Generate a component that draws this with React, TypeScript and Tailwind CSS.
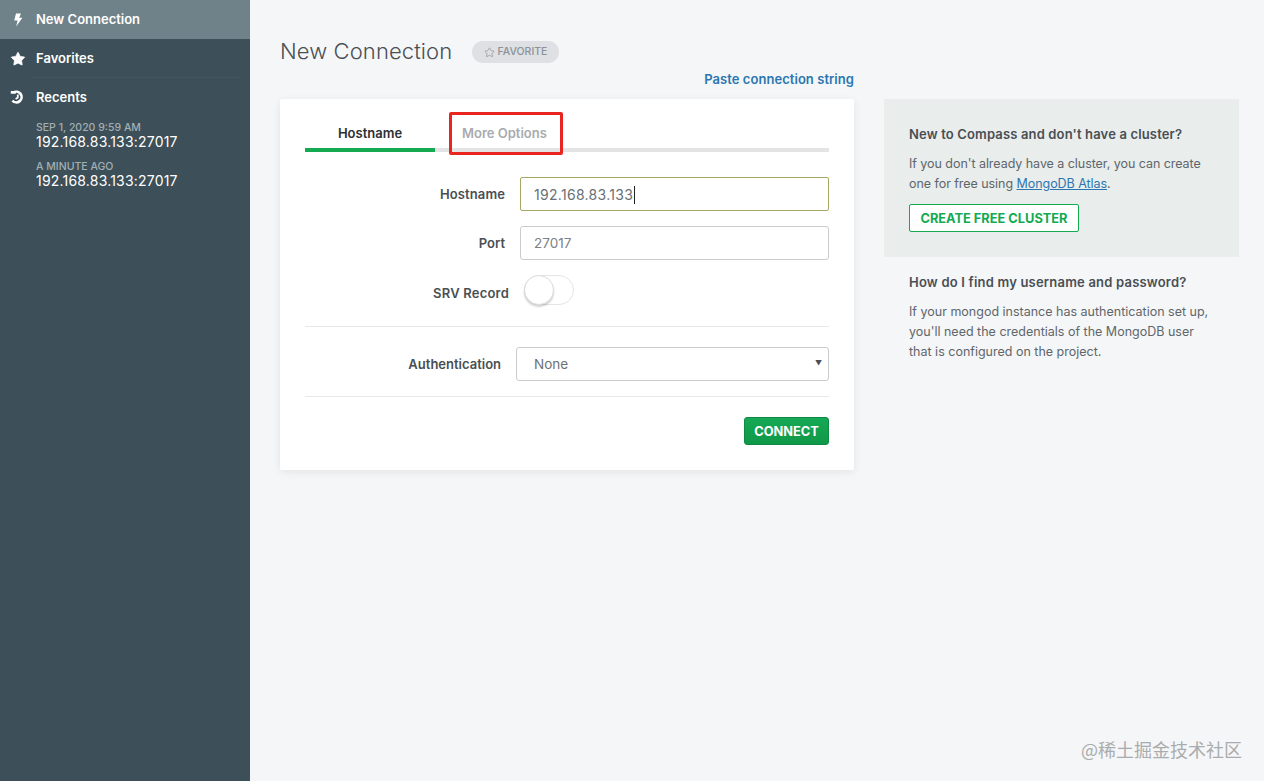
import { Star } from 'lucide-react'

const sans = 'font-["Inter",sans-serif]'

function NavRow({ icon, label, active }: { icon: React.ReactNode; label: string; active?: boolean }) {
  return (
    <div className={`flex h-[39px] items-center ${active ? 'bg-[#6f8189]' : ''}`}>
      <div className="flex w-9 justify-center pr-[1px] text-white">{icon}</div>
      <span className="text-[13px] font-semibold text-white">{label}</span>
    </div>
  )
}

function Recent({ when }: { when: string }) {
  return (
    <div className="mb-[9px] pl-9">
      <div className="h-[13px] text-[10.5px] leading-[13px] font-medium text-[#a3afb5]">{when}</div>
      <div className="h-[17px] text-[14px] leading-[15px] tracking-[0.2px] text-white">192.168.83.133:27017</div>
    </div>
  )
}

function Label({ children, className }: { children: React.ReactNode; className?: string }) {
  return <label className={`pt-[2px] text-right text-[13px] font-semibold text-[#494f54] ${className ?? ''}`}>{children}</label>
}

export default function App() {
  return (
    <div className={`relative flex h-[781px] w-[1264px] overflow-hidden bg-[#f5f6f7] ${sans}`}>
      {/* Sidebar */}
      <aside className="w-[250px] shrink-0 bg-[#3d4f58]">
        <NavRow
          active
          label="New Connection"
          icon={
            <svg width="10" height="14" viewBox="0 0 10 14" fill="white">
              <path d="M3 0.5h5L6.2 4.8H9.4L3.2 13.6 4.6 7.4H1.2z" />
            </svg>
          }
        />
        <NavRow label="Favorites" icon={<Star size={16} fill="white" strokeWidth={1} />} />
        <div className="-mt-px ml-8 mr-[10px] h-px bg-[#445660]" />
        <NavRow
          label="Recents"
          icon={
            <svg width="15" height="15" viewBox="0 0 15 15" fill="none" stroke="white">
              <path d="M0.8 2.4h5M3.4 2.6a5.3 5.3 0 1 1 -1 8" strokeWidth="2.6" />
              <path d="M7.8 4.6v3l-2.2 1.3" strokeWidth="1.8" />
            </svg>
          }
        />
        <div className="pt-[4px]">
          <Recent when="SEP 1, 2020 9:59 AM" />
          <Recent when="A MINUTE AGO" />
        </div>
      </aside>

      {/* Main */}
      <main className="flex-1 pl-[30px] pt-[37px]">
        <div className="flex h-[28px] items-center">
          <h1 className="w-[172px] whitespace-nowrap text-[22px] leading-[28px] font-light tracking-[0.1px] text-[#494f54]">New Connection</h1>
          <span className="ml-5 mt-[2px] flex h-[22px] w-[87px] items-center justify-center gap-[3px] rounded-full bg-[#dee0e3] text-[10.5px] font-medium text-[#8b9298]">
            <Star size={11} strokeWidth={1.5} />
            FAVORITE
          </span>
        </div>

        <div className="flex gap-[30px]">
          <div className="w-[574px]">
            <div className="flex h-[34px] items-end justify-end pb-[12px] text-[13px] leading-[16px] font-semibold tracking-[0.05px] text-[#2b76b0]">
              Paste connection string
            </div>

            {/* Connection card */}
            <div className="h-[371px] rounded-[2px] bg-white px-[25px] pt-[20px] shadow-[0_2px_8px_rgba(0,0,0,0.08)]">
              <div className="flex h-[33px] border-b-4 border-[#e4e4e4]">
                <div className="-mb-1 flex h-[33px] w-[130px] justify-center border-b-4 border-[#13aa52] pt-[6px] text-[13px] leading-[16px] font-semibold text-[#2c3033]">
                  Hostname
                </div>
                <div className="ml-[27px] pt-[6px] text-[13px] leading-[16px] font-semibold text-[#a8abad]">More Options</div>
              </div>

              <div className="mt-[25px] flex items-center">
                <Label className="w-[200px] tracking-[0.1px]">Hostname</Label>
                <div className="ml-[15px] flex h-[34px] flex-1 items-center rounded-[2px] border border-[#a8a866] pl-[13px] pt-[1px] text-[14px] tracking-[0.3px] text-[#6a7075]">
                  192.168.83.133
                  <span className="ml-px h-[18px] w-px bg-[#222]" />
                </div>
              </div>

              <div className="mt-[15px] flex items-center">
                <Label className="w-[200px]">Port</Label>
                <div className="ml-[15px] flex h-[34px] flex-1 items-center rounded-[3px] border border-[#c9cccf] pl-[13px] pt-[1px] text-[13.5px] text-[#7b8185]">
                  27017
                </div>
              </div>

              <div className="mt-[14px] flex h-[32px] items-center">
                <Label className="mt-[6px] w-[204px] tracking-[0.2px]">SRV Record</Label>
                <div className="relative ml-[15px] h-[30px] w-[50px] rounded-full border border-[#e4e5e6] bg-white">
                  <div className="absolute -left-px -top-px h-[30px] w-[30px] rounded-full border border-[#dcdcdc] bg-white shadow-[0_2px_2px_rgba(0,0,0,0.18)]" />
                </div>
              </div>

              <div className="mt-[20px] h-px bg-[#e8e8e8]" />

              <div className="mt-[20px] flex items-center">
                <Label className="w-[196px]">Authentication</Label>
                <div className="relative ml-[15px] flex h-[34px] flex-1 items-center rounded-[3px] border border-[#c9cccf] pl-[17px] text-[13.5px] text-[#6c7277]">
                  None
                  <span className="absolute right-[6px] top-[12px] text-[7px] leading-[8px] text-[#4a4f53]">▼</span>
                </div>
              </div>

              <div className="mt-[15px] h-px bg-[#e8e8e8]" />

              <div className="mt-[20px] flex justify-end">
                <button className="h-[28px] w-[85px] rounded-[3px] border border-[#0e8a42] bg-gradient-to-b from-[#15a855] to-[#109849] pt-[1px] text-[12.8px] font-bold text-white">
                  CONNECT
                </button>
              </div>
            </div>
          </div>

          {/* Help column */}
          <div className="w-[355px] pt-[34px]">
            <div className="h-[158px] bg-[#e9edec] px-[25px] pt-[27px]">
              <h2 className="text-[13px] leading-[16px] font-semibold tracking-[0.15px] text-[#494f54]">New to Compass and don't have a cluster?</h2>
              <p className="mt-[12px] text-[12.5px] leading-[20px] tracking-[-0.05px] text-[#5f666b]">
                If you don't already have a cluster, you can create
                <br />
                one for free using <span className="text-[#2b76b0] underline">MongoDB Atlas</span>.
              </p>
              <button className="mt-[10px] h-[28px] w-[170px] rounded-[2px] border border-[#13aa52] bg-white pt-[1px] text-[12.8px] font-bold text-[#13aa52]">
                CREATE FREE CLUSTER
              </button>
            </div>
            <div className="px-[25px] pt-[17px]">
              <h2 className="text-[13px] leading-[16px] font-semibold tracking-[0.2px] text-[#494f54]">How do I find my username and password?</h2>
              <p className="mt-[12px] text-[12.5px] leading-[20px] text-[#5f666b]">
                If your mongod instance has authentication set up,
                <br />
                you'll need the credentials of the MongoDB user
                <br />
                that is configured on the project.
              </p>
            </div>
          </div>
        </div>
      </main>

      {/* Annotation over the tab */}
      <div className="absolute left-[449px] top-[112px] h-[43px] w-[114px] rounded-[2px] border-[3px] border-[#e8261f]" />

      {/* Watermark */}
      <div className='absolute left-[1081px] top-[738px] font-["Noto_Sans_CJK_SC",sans-serif] text-[18px] leading-[22px] text-[#a9acae]'>
        @稀土掘金技术社区
      </div>
    </div>
  )
}
